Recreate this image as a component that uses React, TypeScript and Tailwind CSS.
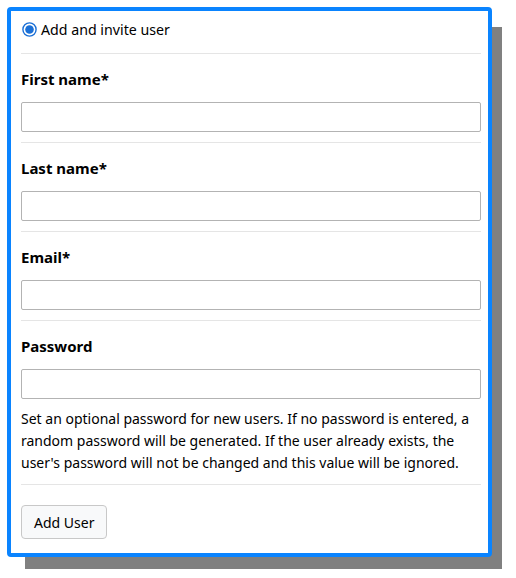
import React from 'react';

const fields = [
  { id: 'first', label: 'First name*' },
  { id: 'last', label: 'Last name*' },
  { id: 'email', label: 'Email*' },
  { id: 'password', label: 'Password' },
];

const App: React.FC = () => {
  return (
    <div className="w-[516px] h-[578px] bg-white p-[7px] font-['Noto_Sans',sans-serif] text-[15px] text-black">
      <div className="w-[485px] h-[550px] rounded-[4px] border-4 border-[#0a84ff] bg-white pl-[10px] pr-[7px] shadow-[14px_16px_0_-4px_#808080]">
        {/* mode */}
        <div className="flex items-start gap-[4px] h-[43px] pt-[8px] border-b border-[#e5e5e5]">
          <svg width="15" height="15" viewBox="0 0 15 15" className="ml-[1px] mt-[3px]">
            <circle cx="7.5" cy="7.5" r="6.6" fill="white" stroke="#1a6fd6" strokeWidth="1.4" />
            <circle cx="7.5" cy="7.5" r="4.3" fill="#1a6fd6" />
          </svg>
          <span className="text-[14.2px] leading-[21px]">Add and invite user</span>
        </div>

        {fields.map((f) => (
          <div key={f.id} className="pt-[13px] pb-[10px] border-b border-[#e5e5e5]">
            <label htmlFor={f.id} className="block font-bold leading-6 mb-[11px]">
              {f.label}
            </label>
            <input
              id={f.id}
              type={f.id === 'password' ? 'password' : 'text'}
              className="block w-full h-[30px] rounded-[2px] border border-[#b3b3b3] bg-white px-2 outline-none"
            />
            {f.id === 'password' && (
              <p className="mt-[9px] leading-[22px] text-[14px]">
                Set an optional password for new users. If no password is entered, a random password
                will be generated. If the user already exists, the user's password will not be
                changed and this value will be ignored.
              </p>
            )}
          </div>
        ))}

        <div className="pt-[20px]">
          <button className="h-[34px] px-[12px] rounded-[4px] border border-[#c8c8c8] bg-[#f8f9fa] text-[14px] text-black">
            Add User
          </button>
        </div>
      </div>
    </div>
  );
};

export default App;
